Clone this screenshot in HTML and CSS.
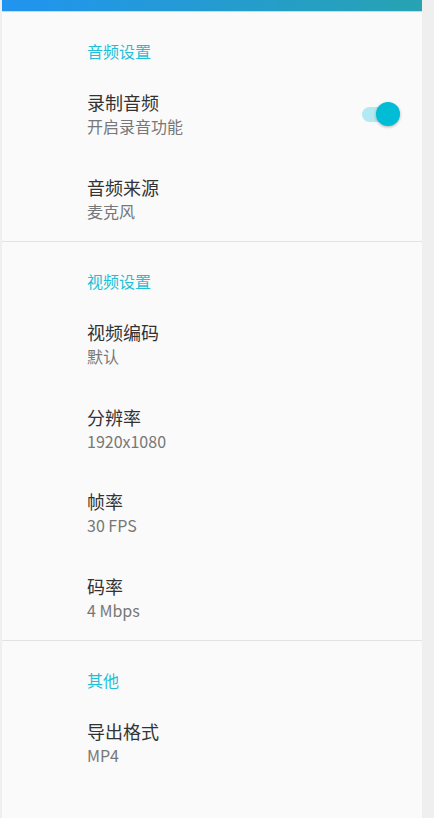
FILE: index.html
```html
<!DOCTYPE html>
<html lang="zh-CN">
<head>
    <meta charset="UTF-8">
    <meta name="viewport" content="width=device-width, initial-scale=1.0">
    <title>录制设置</title>
    <link rel="stylesheet" href="styles.css">
</head>
<body>
    <div id="settings-panel">
        <div class="top-bar"></div>

        <div class="section">
            <h3 class="section-title">音频设置</h3>
            <div class="item">
                <div class="item-text">
                    <div class="item-title">录制音频</div>
                    <div class="item-summary">开启录音功能</div>
                </div>
                <div class="switch on">
                    <div class="switch-track"></div>
                    <div class="switch-thumb"></div>
                </div>
            </div>
            <div class="item">
                <div class="item-text">
                    <div class="item-title">音频来源</div>
                    <div class="item-summary">麦克风</div>
                </div>
            </div>
        </div>

        <div class="section">
            <h3 class="section-title">视频设置</h3>
            <div class="item">
                <div class="item-text">
                    <div class="item-title">视频编码</div>
                    <div class="item-summary">默认</div>
                </div>
            </div>
            <div class="item">
                <div class="item-text">
                    <div class="item-title">分辨率</div>
                    <div class="item-summary">1920x1080</div>
                </div>
            </div>
            <div class="item">
                <div class="item-text">
                    <div class="item-title">帧率</div>
                    <div class="item-summary">30 FPS</div>
                </div>
            </div>
            <div class="item">
                <div class="item-text">
                    <div class="item-title">码率</div>
                    <div class="item-summary">4 Mbps</div>
                </div>
            </div>
        </div>

        <div class="section">
            <h3 class="section-title">其他</h3>
            <div class="item">
                <div class="item-text">
                    <div class="item-title">导出格式</div>
                    <div class="item-summary">MP4</div>
                </div>
            </div>
        </div>
    </div>
</body>
</html>
```

FILE: styles.css
```css
body {
    margin: 0;
    padding: 0 12px 0 2px;
    background-color: #efefef;
    font-family: "Noto Sans CJK SC", "Noto Sans", sans-serif;
}

#settings-panel {
    background-color: #fafafa;
    min-height: 818px;
}

.top-bar {
    height: 11px;
    background: linear-gradient(to right, #2194f0, #27a3b2);
    border-bottom: 1px solid #b6def5;
}

.section {
    padding-top: 29px;
    border-bottom: 1px solid #e2e2e2;
}

.section:last-child {
    border-bottom: none;
}

.section-title {
    margin: 0 0 11px 85px;
    height: 20px;
    line-height: 20px;
    font-size: 16px;
    font-weight: normal;
    color: #1ec0d8;
}

.item {
    display: flex;
    align-items: center;
    justify-content: space-between;
    height: 84.5px;
    padding: 0 22px 0 85px;
    box-sizing: border-box;
}

.item-title {
    font-size: 18px;
    line-height: 24px;
    color: #333333;
}

.item-summary {
    font-size: 16px;
    line-height: 24px;
    color: #777777;
}

.switch {
    position: relative;
    width: 38px;
    height: 24px;
}

.switch-track {
    position: absolute;
    left: 0;
    right: 4px;
    top: 5px;
    height: 15px;
    border-radius: 8px;
    background-color: #b3e9f0;
}

.switch-thumb {
    position: absolute;
    right: 0;
    top: 0;
    width: 24px;
    height: 24px;
    border-radius: 50%;
    background-color: #00bcd4;
    box-shadow: 0 1px 3px rgba(0, 0, 0, 0.3);
}
```
